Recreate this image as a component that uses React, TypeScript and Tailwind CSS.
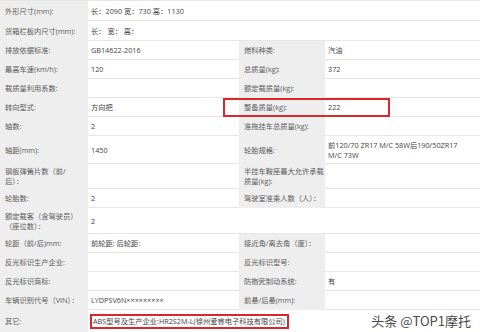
import type { ReactNode } from "react";

type Row = {
  h: string;
  l1: ReactNode;
  v1?: ReactNode;
  l2?: ReactNode;
  v2?: ReactNode;
  wide?: boolean;
};

const rows: Row[] = [
  { h: "h-[20px]", l1: "外形尺寸(mm):", v1: "长：2090 宽：730 高：1130", wide: true },
  { h: "h-[20px]", l1: "货箱栏板内尺寸(mm):", v1: "长： 宽： 高：", wide: true },
  { h: "h-[19px]", l1: "排放依据标准:", v1: "GB14622-2016", l2: "燃料种类:", v2: "汽油" },
  { h: "h-[19px]", l1: "最高车速(km/h):", v1: "120", l2: "总质量(kg):", v2: "372" },
  { h: "h-[19px]", l1: "载质量利用系数:", v1: "", l2: "额定载质量(kg):", v2: "" },
  { h: "h-[19px]", l1: "转向型式:", v1: "方向把", l2: "整备质量(kg):", v2: "222" },
  { h: "h-[19px]", l1: "轴数:", v1: "2", l2: "准拖挂车总质量(kg):", v2: "" },
  {
    h: "h-[28px]",
    l1: "轴距(mm):",
    v1: "1450",
    l2: "轮胎规格:",
    v2: (
      <>
        前120/70 ZR17 M/C 58W后190/50ZR17
        <br />
        M/C 73W
      </>
    ),
  },
  {
    h: "h-[25px]",
    l1: (
      <>
        钢板弹簧片数（前/
        <br />
        后）：
      </>
    ),
    v1: "",
    l2: (
      <>
        半挂车鞍座最大允许承载
        <br />
        质量(kg):
      </>
    ),
    v2: "",
  },
  { h: "h-[19px]", l1: "轮胎数:", v1: "2", l2: "驾驶室准乘人数（人）：", v2: "" },
  {
    h: "h-[26px]",
    l1: (
      <>
        额定载客（含驾驶员）
        <br />
        （座位数）：
      </>
    ),
    v1: "2",
    wide: true,
  },
  { h: "h-[19px]", l1: "轮距（前/后)mm:", v1: "前轮距: 后轮距:", l2: "接近角/离去角（度）：", v2: "" },
  { h: "h-[19px]", l1: "反光标识生产企业:", v1: "", l2: "反光标识型号:", v2: "" },
  { h: "h-[19px]", l1: "反光标识商标:", v1: "", l2: "防抱死制动系统:", v2: "有" },
  { h: "h-[19px]", l1: "车辆识别代号（VIN）：", v1: "LYDPSV6N×××××××××", l2: "前悬/后悬(mm):", v2: "" },
  {
    h: "h-[23px]",
    l1: "其它:",
    v1: (
      <span className="inline-block border-2 border-[#d8282b] pl-[1px] pr-[2px] leading-[11px] -ml-[1px]">
        ABS型号及生产企业:HR2S2M-L(徐州爱睿电子科技有限公司)
      </span>
    ),
    wide: true,
  },
];

const label = "bg-[#eeeeee] pl-[5px] pr-0 align-middle text-[#5a5a5a]";
const value = "bg-white pl-[3px] align-middle border-b border-[#e6e6e6] text-[#444]";

export default function App() {
  return (
    <div className="relative w-[480px] h-[332px] overflow-hidden bg-white font-['Open_Sans','Noto_Sans_CJK_SC',sans-serif] text-[7.25px] leading-[10px]">
      <table className="w-[480px] table-fixed border-collapse border-t border-[#e6e6e6]">
        <colgroup>
          <col className="w-[88px]" />
          <col className="w-[151px]" />
          <col className="w-[86px]" />
          <col className="w-[155px]" />
        </colgroup>
        <tbody>
          {rows.map((r, i) => (
            <tr key={i} className={r.h}>
              <td className={label}>{r.l1}</td>
              {r.wide ? (
                <td colSpan={3} className={value}>
                  {r.v1}
                </td>
              ) : (
                <>
                  <td className={value}>{r.v1}</td>
                  <td className={label}>{r.l2}</td>
                  <td className={value}>{r.v2}</td>
                </>
              )}
            </tr>
          ))}
        </tbody>
      </table>

      {/* annotation around 整备质量 */}
      <div className="absolute left-[223px] top-[98px] w-[167px] h-[19px] border-2 border-[#d8282b]" />

      {/* watermark */}
      <div className="absolute right-[9px] bottom-[3px] text-[13px] leading-[16px] text-[#4a4a4a] font-['Noto_Sans_CJK_SC',sans-serif] [text-shadow:0_0_2px_#fff,0_0_1px_#fff]">
        头条 @TOP1摩托
      </div>
    </div>
  );
}
